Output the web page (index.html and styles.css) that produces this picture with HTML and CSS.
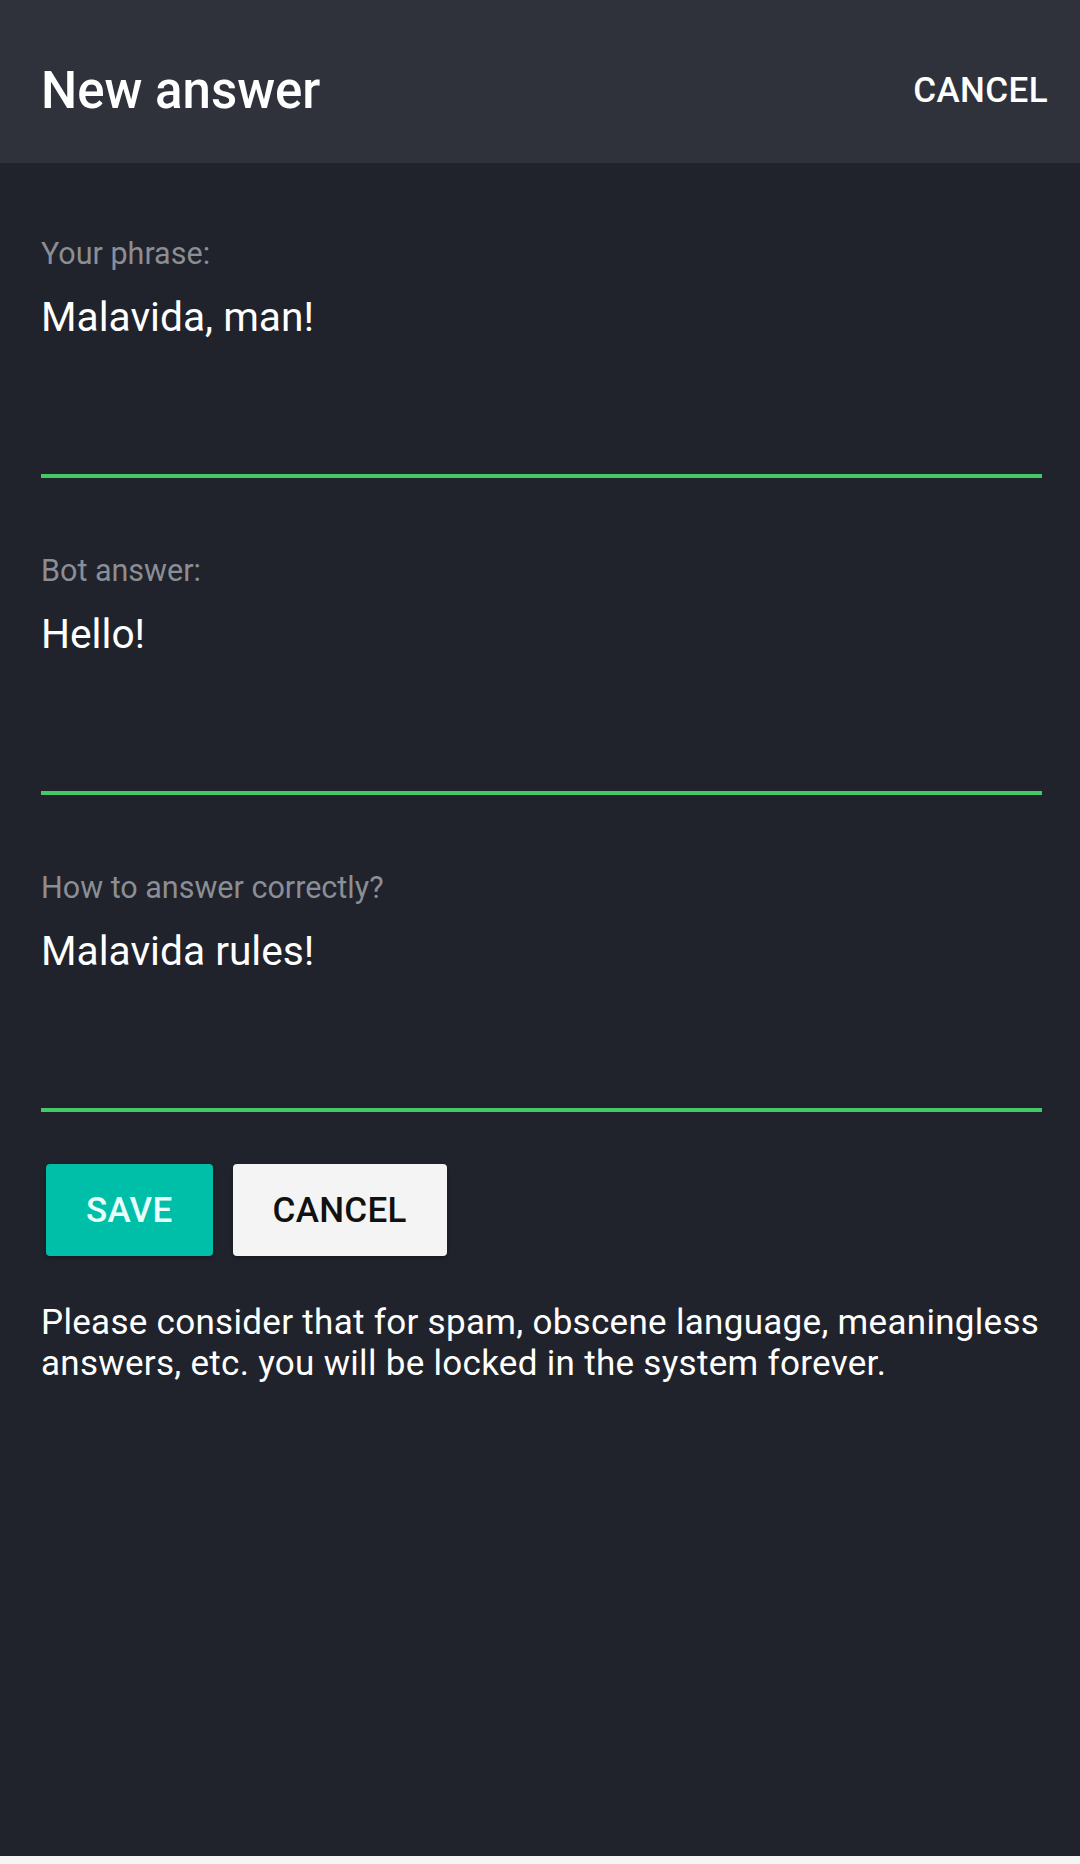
FILE: index.html
```html
<!DOCTYPE html>
<html lang="en">
<head>
<meta charset="utf-8">
<title>New answer</title>
<link rel="stylesheet" href="styles.css">
</head>
<body>
<div class="app">
  <header class="topbar">
    <h1 class="title">New answer</h1>
    <button class="top-cancel">CANCEL</button>
  </header>
  <main class="content">
    <div class="field">
      <div class="label">Your phrase:</div>
      <div class="value">Malavida, man!</div>
    </div>
    <div class="field">
      <div class="label">Bot answer:</div>
      <div class="value">Hello!</div>
    </div>
    <div class="field">
      <div class="label">How to answer correctly?</div>
      <div class="value">Malavida rules!</div>
    </div>
    <div class="actions">
      <button class="btn btn-save">SAVE</button>
      <button class="btn btn-cancel">CANCEL</button>
    </div>
    <p class="notice">Please consider that for spam, obscene language, meaningless answers, etc. you will be locked in the system forever.</p>
  </main>
  <div class="bottom-strip"></div>
</div>
</body>
</html>
```

FILE: styles.css
```css
* { box-sizing: border-box; }
html, body {
  margin: 0;
  padding: 0;
  background: #20232b;
}
body {
  font-family: Roboto, "Noto Sans", "Liberation Sans", sans-serif;
  color: #ffffff;
}
.app {
  display: flex;
  flex-direction: column;
  min-height: 1864px;
}
.topbar {
  height: 163px;
  background: #2f323b;
  display: flex;
  justify-content: space-between;
  align-items: flex-start;
  padding: 0 32px 0 41px;
}
.title {
  margin: 61px 0 0 0;
  font-size: 51px;
  line-height: 60px;
  font-weight: 500;
  color: #ffffff;
}
.top-cancel {
  margin-top: 71px;
  padding: 0;
  border: none;
  background: none;
  font-family: inherit;
  font-size: 35px;
  line-height: 40px;
  font-weight: 500;
  letter-spacing: 0.4px;
  color: #ffffff;
}
.content {
  flex: 1;
  padding: 0 39px 0 41px;
}
.field {
  padding-top: 73px;
  border-bottom: 4px solid #45c966;
  margin-right: -1px;
}
.field + .field {
  padding-top: 75px;
}
.label {
  font-size: 30.5px;
  line-height: 36px;
  color: #8b8e94;
}
.value {
  margin-top: 21px;
  font-size: 40.7px;
  line-height: 48px;
  color: #ffffff;
  padding-bottom: 133px;
}
.actions {
  display: flex;
  gap: 20px;
  margin: 52px 0 0 5px;
}
.btn {
  height: 92px;
  padding: 0 40px;
  border: none;
  border-radius: 4px;
  font-family: inherit;
  font-size: 35px;
  font-weight: 500;
  letter-spacing: 0.3px;
  box-shadow: 0 2px 4px rgba(0, 0, 0, 0.3);
}
.btn-save {
  background: #00bfa8;
  color: #e8fffb;
}
.btn-cancel {
  background: #f4f4f4;
  color: #111111;
}
.notice {
  margin: 46px -20px 0 0;
  font-size: 35px;
  line-height: 41px;
  letter-spacing: 0.3px;
  color: #ffffff;
}
.bottom-strip {
  height: 8px;
  background: #f5f5f5;
}
```
